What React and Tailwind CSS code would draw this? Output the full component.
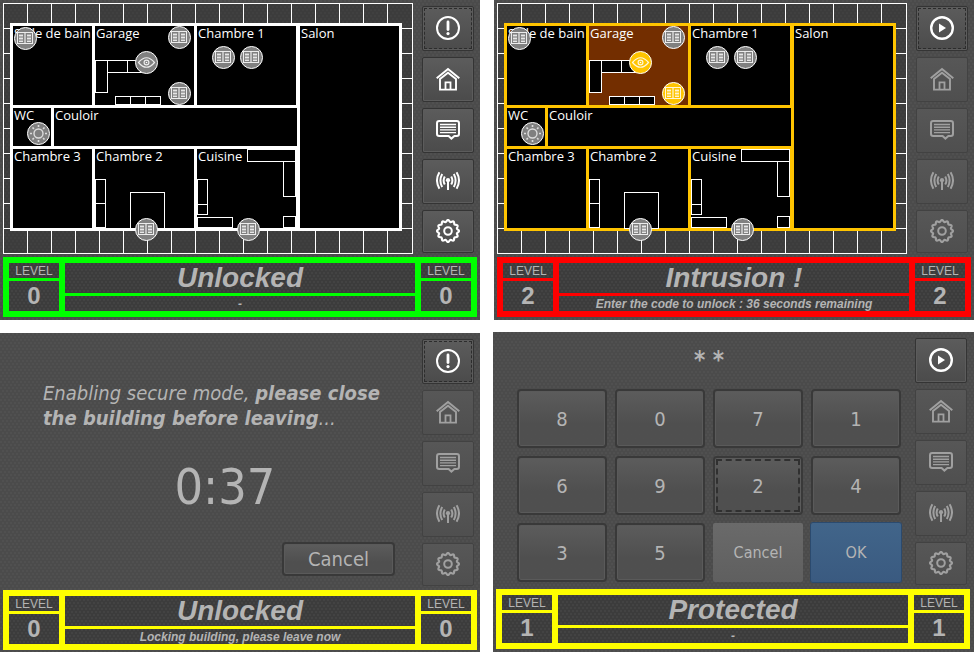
import React from "react";

const ROOM_LABELS = [
  { x: 14, y: 38, text: "Salle de bain" },
  { x: 96, y: 38, text: "Garage" },
  { x: 198, y: 38, text: "Chambre 1" },
  { x: 301, y: 38, text: "Salon" },
  { x: 14, y: 120, text: "WC" },
  { x: 55, y: 120, text: "Couloir" },
  { x: 14, y: 161, text: "Chambre 3" },
  { x: 96, y: 161, text: "Chambre 2" },
  { x: 198, y: 161, text: "Cuisine" },
];

const ROOMS = [
  { id: "salle-de-bain", x: 13, y: 26, w: 79, h: 79 },
  { id: "garage", x: 95, y: 26, w: 99, h: 79 },
  { id: "chambre-1", x: 197, y: 26, w: 99, h: 79 },
  { id: "salon", x: 300, y: 26, w: 99, h: 202 },
  { id: "wc", x: 13, y: 108, w: 38, h: 38 },
  { id: "couloir", x: 54, y: 108, w: 243, h: 38 },
  { id: "chambre-3", x: 13, y: 149, w: 79, h: 79 },
  { id: "chambre-2", x: 95, y: 149, w: 99, h: 79 },
  { id: "cuisine", x: 197, y: 149, w: 99, h: 79 },
];

// x, y, width, height of every piece of furniture
const FURNITURE = [
  [95, 60, 12, 32],
  [107, 60, 20, 12],
  [127, 60, 20, 12],
  [115, 96, 15, 8],
  [130, 96, 15, 8],
  [145, 96, 15, 8],
  [95, 179, 10, 24],
  [95, 203, 10, 24],
  [130, 192, 34, 36],
  [247, 149, 48, 12],
  [283, 161, 12, 35],
  [283, 216, 12, 11],
  [197, 179, 10, 25],
  [197, 204, 10, 10],
  [197, 217, 35, 10],
];

const SENSORS = [
  { id: "s1", kind: "window", x: 25, y: 38 },
  { id: "s2", kind: "window", x: 179, y: 37 },
  { id: "s3", kind: "eye", x: 146, y: 62 },
  { id: "s4", kind: "window", x: 179, y: 93 },
  { id: "s5", kind: "window", x: 223, y: 57 },
  { id: "s6", kind: "window", x: 251, y: 57 },
  { id: "s7", kind: "sun", x: 38, y: 133 },
  { id: "s8", kind: "window", x: 146, y: 229 },
  { id: "s9", kind: "window", x: 248, y: 229 },
];

const GRID_X = Array.from({ length: 16 }, (_, i) => 27 + i * 24);
const GRID_Y = Array.from({ length: 9 }, (_, i) => 28 + i * 25);

function SensorGlyph({ kind }) {
  if (kind === "eye") {
    return (
      <g fill="none" stroke="#fff" strokeWidth="1.2" strokeOpacity="0.85">
        <path d="M-8 0Q0-9.5 8 0Q0 9.5-8 0Z" />
        <circle r="2.4" />
        <circle r="0.8" fill="#fff" stroke="none" />
      </g>
    );
  }
  if (kind === "sun") {
    return (
      <g fill="none" stroke="#dcdcdc">
        <circle r="4.5" strokeWidth="1.4" />
        {[0, 45, 90, 135, 180, 225, 270, 315].map((a) => (
          <path key={a} d="M0-6.5V-8.5" strokeWidth="1.6" transform={`rotate(${a})`} />
        ))}
      </g>
    );
  }
  return (
    <g shapeRendering="crispEdges" stroke="#fff">
      <rect x="-8" y="-6" width="15" height="11" fill="none" strokeOpacity="0.85" />
      <path d="M-0.5-5.5V4.5" strokeOpacity="0.5" strokeWidth="2" />
      <path d="M-4.5-4.5V3.5M3.5-4.5V3.5" strokeOpacity="0.35" strokeWidth="4" />
      <path d="M-6.5-3H-2.5M-6.5 0H-2.5M-6.5 3H-2.5M1.5-3H5.5M1.5 0H5.5M1.5 3H5.5" strokeOpacity="0.7" />
    </g>
  );
}

function FloorPlan({ alarmRoom, alarmSensors = [] }) {
  const wall = alarmRoom ? "#ffc400" : "#fff";
  return (
    <svg viewBox="3 3 410 251" className="block h-auto w-full" role="img" aria-label="Floor plan">
      <g shapeRendering="crispEdges">
        <rect x="3.5" y="3.5" width="409" height="250" fill="#000" fillOpacity="0.2" stroke="#fff" />
        {GRID_X.map((x) => (
          <path key={x} d={`M${x + 0.5} 3V254`} stroke="#fff" />
        ))}
        {GRID_Y.map((y) => (
          <path key={y} d={`M3 ${y + 0.5}H413`} stroke="#fff" />
        ))}
        <rect x="10" y="23" width="392" height="208" fill={wall} />
        {ROOMS.map((r) => (
          <rect key={r.id} x={r.x} y={r.y} width={r.w} height={r.h} fill={r.id === alarmRoom ? "#732e00" : "#000"} />
        ))}
        {FURNITURE.map(([x, y, w, h]) => (
          <rect key={`${x}-${y}`} x={x + 0.5} y={y + 0.5} width={w} height={h} fill="#000" stroke="#fff" />
        ))}
      </g>
      <g fill="#fff" className="font-['Open_Sans','Noto_Sans',sans-serif] text-[13px]">
        {ROOM_LABELS.map((l) => (
          <text key={l.text} x={l.x} y={l.y}>
            {l.text}
          </text>
        ))}
      </g>
      {SENSORS.map((s) => (
        <g key={s.id} transform={`translate(${s.x + 0.5} ${s.y + 0.5})`}>
          <circle r="11" fill={alarmSensors.includes(s.id) ? "#ffc400" : "#808080"} stroke="#fff" />
          <SensorGlyph kind={s.kind} />
        </g>
      ))}
    </svg>
  );
}

function gearPath(teeth) {
  const steps = teeth * 12;
  const pts = [];
  for (let i = 0; i < steps; i++) {
    const a = (i / steps) * Math.PI * 2;
    const r = 10.1 + 0.9 * Math.cos(a * teeth);
    pts.push(`${(12 + r * Math.sin(a)).toFixed(2)} ${(12 - r * Math.cos(a)).toFixed(2)}`);
  }
  return `M${pts.join("L")}Z`;
}

const GEAR = gearPath(12);

function Icon({ name }) {
  const common = {
    viewBox: "0 0 24 24",
    className: "size-6",
    fill: "none",
    stroke: "currentColor",
    strokeWidth: 2,
    "aria-hidden": true,
  };
  switch (name) {
    case "alert":
      return (
        <svg {...common}>
          <circle cx="12" cy="12" r="11" />
          <path d="M12 6V13.5" strokeWidth="2.8" strokeLinecap="round" />
          <circle cx="12" cy="17.6" r="1.6" fill="currentColor" stroke="none" />
        </svg>
      );
    case "play":
      return (
        <svg {...common}>
          <circle cx="12" cy="12" r="10.8" strokeWidth="2.4" />
          <path d="M9 7.5V16.5L16 12Z" fill="currentColor" stroke="none" />
        </svg>
      );
    case "home":
      return (
        <svg {...common}>
          <path d="M0.7 11.2L12 2L23.3 11.2" />
          <path d="M4 12V22.6H20V12L12 5.8Z" strokeWidth="1.9" />
          <path d="M9.5 22.6V15.4H14.5V22.6" strokeWidth="1.8" />
        </svg>
      );
    case "messages":
      return (
        <svg {...common}>
          <path d="M3.2 3H20.8Q23 3 23 5.2V15.8Q23 18 20.8 18H18.4L15.4 20.6L12.6 18H3.2Q1 18 1 15.8V5.2Q1 3 3.2 3Z" />
          <path d="M4 6.5H20M4 9.2H20M4 11.9H20M4 14.6H20" strokeWidth="1.4" />
        </svg>
      );
    case "antenna":
      return (
        <svg {...common}>
          <circle cx="12" cy="11.2" r="2.1" fill="currentColor" stroke="none" />
          <path d="M12 12V21" />
          <path d="M3.4 3.3Q-1.4 11.5 3.4 19.8M6.2 5Q2.6 11.5 6.2 18M8.8 7.4Q6.4 11.5 8.8 15.6" />
          <path d="M20.6 3.3Q25.4 11.5 20.6 19.8M17.8 5Q21.4 11.5 17.8 18M15.2 7.4Q17.6 11.5 15.2 15.6" />
        </svg>
      );
    default:
      return (
        <svg {...common}>
          <path d={GEAR} strokeWidth="2.1" strokeLinejoin="round" />
          <circle cx="12" cy="12" r="3.8" />
        </svg>
      );
  }
}

const NAV = [
  { icon: "home", label: "Home" },
  { icon: "messages", label: "Messages" },
  { icon: "antenna", label: "Sensors" },
  { icon: "settings", label: "Settings" },
];

function NavButton({ icon, label, disabled, focused }) {
  return (
    <button
      type="button"
      aria-label={label}
      disabled={disabled}
      className={`flex h-[45px] shrink-0 items-center justify-center rounded-xs border bg-linear-to-b pb-px last:h-[43px] ${
        disabled
          ? "border-[#424242] from-[#575757] to-[#4f4f4f] text-[#a0a0a0]"
          : "border-[#343434] from-[#5c5c5c] to-[#4b4b4b] text-white inset-shadow-[0_0_0_1px_#5c5c5c]"
      } ${focused ? "outline-1 -outline-offset-3 outline-dashed outline-[#2c2c2c]" : ""}`}
    >
      <Icon name={icon} />
    </button>
  );
}

function Sidebar({ primary, navDisabled, focused = true }) {
  return (
    <nav className="flex w-[52px] shrink-0 flex-col gap-1.5 pt-1.5">
      <NavButton icon={primary} label={primary === "play" ? "Unlock" : "Lock"} focused={focused} />
      {NAV.map((n) => (
        <NavButton key={n.icon} icon={n.icon} label={n.label} disabled={navDisabled} />
      ))}
    </nav>
  );
}

const TONES = { green: "bg-[#00ff00]", red: "bg-[#ff0000]", yellow: "bg-[#ffff00]" };
const CELL =
  "flex items-center justify-center bg-[#3c3c3c] bg-[radial-gradient(circle_at_1px_1px,#434343_1px,transparent_1px),radial-gradient(circle_at_3px_4px,#434343_1px,transparent_1px)] bg-[size:4px_6px]";

function Level({ value }) {
  return (
    <div className="flex w-[50px] flex-col gap-[3px]">
      <div className={`${CELL} h-[15px] text-xs`}>LEVEL</div>
      <div className={`${CELL} h-[30px] text-2xl font-bold`}>{value}</div>
    </div>
  );
}

function StatusBar({ tone, level, title, detail }) {
  return (
    <footer
      className={`mx-[3px] mb-[3px] flex gap-1.5 p-1.5 font-['Liberation_Sans',Arial,sans-serif] text-[#b4b4b4] ${TONES[tone]}`}
    >
      <Level value={level} />
      <div className="flex flex-1 flex-col gap-[3px] font-bold italic">
        <div className={`${CELL} h-[30px] text-[28px]`}>{title}</div>
        <div className={`${CELL} h-[15px] text-xs`}>{detail}</div>
      </div>
      <Level value={level} />
    </footer>
  );
}

function Screen({ children, sidebar, status, className = "" }) {
  return (
    <section
      className={`flex h-[320px] shrink-0 flex-col justify-between bg-[#4b4b4b] bg-[radial-gradient(circle_at_1px_1px,#505050_1px,transparent_1px),radial-gradient(circle_at_3px_4px,#505050_1px,transparent_1px)] bg-[size:4px_6px] font-['DejaVu_Sans_Condensed','DejaVu_Sans',Tahoma,sans-serif] text-[#b4b4b4] ${className}`}
    >
      <div className="flex gap-[9px] pr-1.5 pl-[3px]">
        <div className="min-w-0 flex-1">{children}</div>
        {sidebar}
      </div>
      {status}
    </section>
  );
}

const RAISED =
  "rounded-sm border-2 border-[#393939] bg-linear-to-b from-[#5c5c5c] to-[#4f4f4f] to-60% inset-shadow-[0_0_0_1px_#5a5a5a]";

function CountdownView() {
  return (
    <div className="flex flex-col pt-12 pr-1.5 pl-10">
      <p className="text-xl leading-[25px] italic">
        Enabling secure mode, <strong>please close</strong>
        <br />
        <strong>the building before leaving</strong>...
      </p>
      <p className="pt-8 text-center text-[50px] leading-[48px]">0:37</p>
      <button type="button" className={`mt-[31px] mr-3 h-[34px] w-[113px] self-end text-xl leading-none ${RAISED}`}>
        Cancel
      </button>
    </div>
  );
}

function KeypadView() {
  const keys = ["8", "0", "7", "1", "6", "9", "2", "4", "3", "5"];
  return (
    <div className="pr-[5px] pl-[21px]">
      <output className="block h-[57px] pt-3 text-center text-2xl leading-8 font-bold">* *</output>
      <div className="grid grid-cols-4 gap-2 text-xl">
        {keys.map((k) => (
          <button
            key={k}
            type="button"
            className={`h-[59px] ${RAISED} ${k === "2" ? "outline-2 -outline-offset-5 outline-dashed outline-[#303030]" : ""}`}
          >
            {k}
          </button>
        ))}
        <button type="button" className="h-[59px] rounded-xs bg-linear-to-b from-[#6a6a6a] to-[#5f5f5f] text-base">
          Cancel
        </button>
        <button
          type="button"
          className="h-[59px] rounded-xs bg-linear-to-b from-[#41658a] to-[#3a5a80] text-base ring-1 ring-[#2b4a6e]"
        >
          OK
        </button>
      </div>
    </div>
  );
}

export default function App() {
  return (
    <main className="flex h-screen gap-3.5 overflow-hidden bg-white">
      <div className="flex flex-1 flex-col gap-[13px]">
        <Screen
          sidebar={<Sidebar primary="alert" />}
          status={<StatusBar tone="green" level={0} title="Unlocked" detail="-" />}
        >
          <div className="pt-[3px]">
            <FloorPlan />
          </div>
        </Screen>
        <Screen
          sidebar={<Sidebar primary="alert" navDisabled />}
          status={<StatusBar tone="yellow" level={0} title="Unlocked" detail="Locking building, please leave now" />}
        >
          <CountdownView />
        </Screen>
      </div>
      <div className="flex flex-1 flex-col gap-3">
        <Screen
          sidebar={<Sidebar primary="play" navDisabled />}
          status={
            <StatusBar
              tone="red"
              level={2}
              title="Intrusion !"
              detail="Enter the code to unlock : 36 seconds remaining"
            />
          }
        >
          <div className="pt-[3px]">
            <FloorPlan alarmRoom="garage" alarmSensors={["s3", "s4"]} />
          </div>
        </Screen>
        <Screen
          className="-ml-px pr-px"
          sidebar={<Sidebar primary="play" navDisabled focused={false} />}
          status={<StatusBar tone="yellow" level={1} title="Protected" detail="-" />}
        >
          <KeypadView />
        </Screen>
      </div>
    </main>
  );
}
